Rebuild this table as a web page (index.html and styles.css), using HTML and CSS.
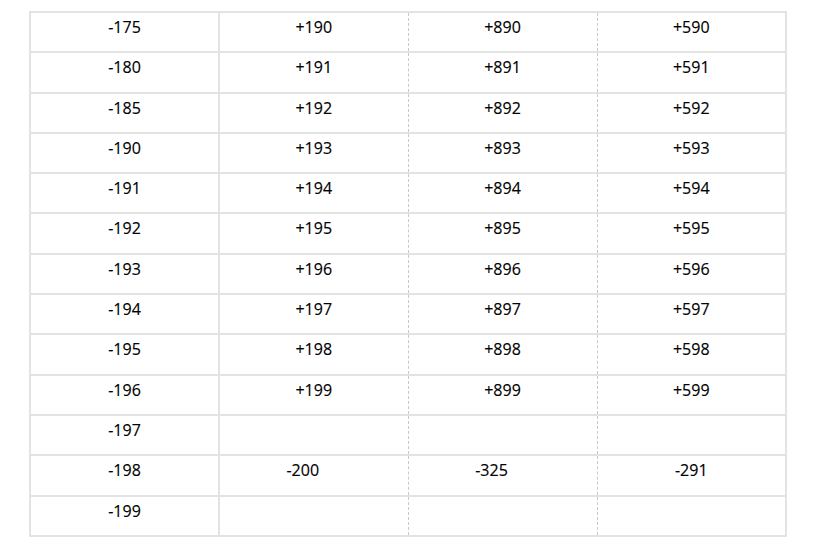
FILE: index.html
```html
<!DOCTYPE html>
<html>
<head>
<meta charset="utf-8">
<link rel="stylesheet" href="styles.css">
</head>
<body>
<table class="grid">
  <colgroup><col><col><col><col></colgroup>
  <tbody>
    <tr><td>-175</td><td>+190</td><td>+890</td><td>+590</td></tr>
    <tr><td>-180</td><td>+191</td><td>+891</td><td>+591</td></tr>
    <tr><td>-185</td><td>+192</td><td>+892</td><td>+592</td></tr>
    <tr><td>-190</td><td>+193</td><td>+893</td><td>+593</td></tr>
    <tr><td>-191</td><td>+194</td><td>+894</td><td>+594</td></tr>
    <tr><td>-192</td><td>+195</td><td>+895</td><td>+595</td></tr>
    <tr><td>-193</td><td>+196</td><td>+896</td><td>+596</td></tr>
    <tr><td>-194</td><td>+197</td><td>+897</td><td>+597</td></tr>
    <tr><td>-195</td><td>+198</td><td>+898</td><td>+598</td></tr>
    <tr><td>-196</td><td>+199</td><td>+899</td><td>+599</td></tr>
    <tr><td>-197</td><td></td><td></td><td></td></tr>
    <tr><td>-198</td><td class="shift">-200</td><td class="shift">-325</td><td>-291</td></tr>
    <tr><td>-199</td><td></td><td></td><td></td></tr>
  </tbody>
</table>
</body>
</html>
```

FILE: styles.css
```css
html, body {
  margin: 0;
  padding: 0;
  background: #ffffff;
}

body {
  padding: 11px 0 0 29px;
  font-family: "Open Sans", "Noto Sans", sans-serif;
  font-size: 16px;
  color: #000000;
}

.grid {
  width: 758px;
  table-layout: fixed;
  border-collapse: collapse;
  border: 2px solid #e3e3e3;
}

.grid tr {
  height: 40.3px;
}

.grid td {
  border-top: 2px solid #e3e3e3;
  border-bottom: 2px solid #e3e3e3;
  text-align: center;
  vertical-align: top;
  padding: 3px 0 0 0;
  line-height: 22px;
  -webkit-text-stroke: 0.15px #000000;
}

.grid td:nth-child(1) {
  border-right: 2px solid #e3e3e3;
}

.grid td:nth-child(2),
.grid td:nth-child(3) {
  border-right: 1px dashed #c9c9c9;
}

.grid td.shift {
  padding-right: 22px;
}
```
